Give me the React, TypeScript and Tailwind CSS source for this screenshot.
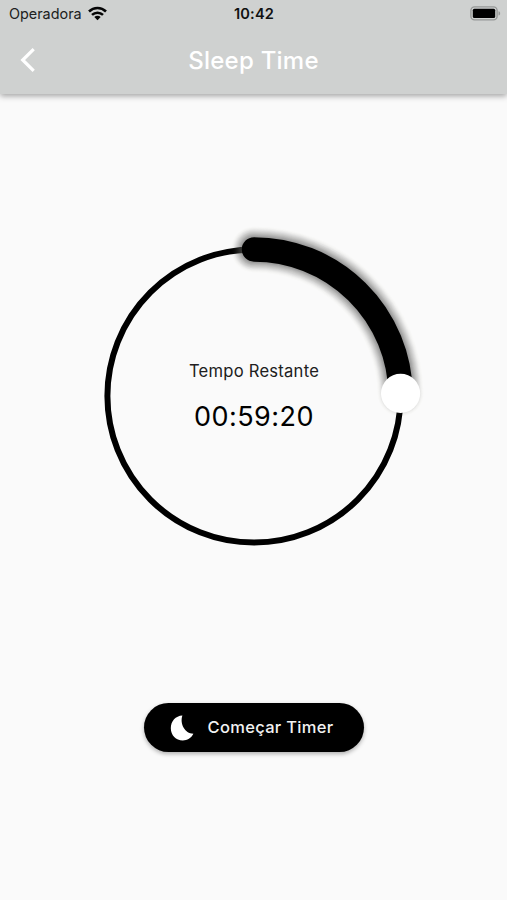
import React from 'react'

const CENTER = 180
const RADIUS = 146.6
const MAX_SHADOW = 46
const TRACK = 24.5

const timer = {
  label: 'Tempo Restante',
  value: '00:59:20',
  progress: 3560 / 14400
}

// widest, faintest strokes first
const shadowSteps = Array.from({ length: 11 }, (_, i) => ({
  width: MAX_SHADOW - i * ((MAX_SHADOW - TRACK) / 11),
  opacity: 0.016 + i * 0.0125
}))

function pointAt(progress: number) {
  const angle = progress * Math.PI * 2 - Math.PI / 2
  return {
    x: CENTER + RADIUS * Math.cos(angle),
    y: CENTER + RADIUS * Math.sin(angle)
  }
}

function WifiIcon() {
  return (
    <svg width="19" height="15" viewBox="0 0 19 15" fill="none" stroke="#050505" strokeWidth="2.6">
      <path d="M1 5.5C5.8 0.9 13.2 0.9 18 5.5" />
      <path d="M4 8.9C7.1 6 11.9 6 15 8.9" />
      <path d="M9.5 14.2L6.3 11.1C8.1 9.4 10.9 9.4 12.7 11.1Z" fill="#050505" stroke="none" />
    </svg>
  )
}

function BatteryIcon() {
  return (
    <svg width="31" height="15" viewBox="0 0 31 15">
      <rect x="0.9" y="0.9" width="26.2" height="13" rx="3.6" fill="none" stroke="#969897" strokeWidth="1.4" />
      <rect x="2.8" y="2.8" width="22.4" height="9.2" rx="1.5" fill="#000" />
      <path d="M28.5 5.2C30.7 5.7 30.7 9.1 28.5 9.6Z" fill="#969897" />
    </svg>
  )
}

function StatusBar() {
  return (
    <div className="grid h-[26px] grid-cols-3 items-center pl-[9px] pr-[6px]">
      <div className="flex items-center gap-[6px]">
        <span className="pt-[2px] text-[14.4px] leading-none text-[#202121]">Operadora</span>
        <WifiIcon />
      </div>
      <span className="pr-[2px] pt-[2px] text-center text-[14.6px] font-semibold leading-none tracking-[0.01em] text-[#101111]">10:42</span>
      <div className="flex justify-end">
        <BatteryIcon />
      </div>
    </div>
  )
}

function Header() {
  return (
    <header className="h-[94px] bg-[#cfd1d0] shadow-[0_2px_6px_rgba(0,0,0,0.36)]">
      <StatusBar />
      <div className="grid h-[67px] grid-cols-[60px_1fr_60px] items-center">
        <button className="pl-[20px]" aria-label="Voltar">
          <svg width="16" height="24" viewBox="0 0 16 24" fill="none" stroke="#fff" strokeWidth="3.2">
            <path d="M13.7 1.2L2.7 12L13.7 22.8" />
          </svg>
        </button>
        <h1 className="pt-[2px] text-center text-[24px] font-medium leading-none tracking-[0.01em] text-white">Sleep Time</h1>
      </div>
    </header>
  )
}

function CircularTimer() {
  const knob = pointAt(timer.progress)
  const arc = `M${CENTER} ${CENTER - RADIUS}A${RADIUS} ${RADIUS} 0 0 1 ${knob.x} ${knob.y}`

  return (
    <div className="grid h-[360px] w-[360px] place-items-center">
      <svg className="col-start-1 row-start-1" width="360" height="360" viewBox="0 0 360 360" fill="none" strokeLinecap="round">
        <circle cx={CENTER} cy={CENTER} r={RADIUS} stroke="#000" strokeWidth="6" />
        {shadowSteps.map((step) => (
          <path key={step.width} d={arc} stroke="#60605f" strokeWidth={step.width} strokeOpacity={step.opacity} />
        ))}
        <path d={arc} stroke="#000" strokeWidth={TRACK} />
        <circle cx={knob.x} cy={knob.y} r="19.6" fill="#fff" />
      </svg>
      <div className="col-start-1 row-start-1 flex flex-col items-center">
        <span className="pl-px text-[16.6px] leading-[24px] tracking-[0.014em] text-[#202020]">{timer.label}</span>
        <span className="mt-[18px] pl-px text-[27px] leading-[32px] tracking-[0.016em] text-black">{timer.value}</span>
      </div>
    </div>
  )
}

function StartButton() {
  return (
    <button className="flex h-[49px] w-[220px] items-center rounded-full bg-black pl-[26px] text-white shadow-[0_2px_4px_rgba(0,0,0,0.3)]">
      <svg width="25" height="26" viewBox="0 0 25 26" fill="#fff">
        <path d="M12.4 0.5C9.6 8.5 14.7 18.4 23.4 18.8C21.2 23.2 17.2 25.5 12.8 25.5C6 25.5 0.8 20 0.8 13.2C0.8 6.2 5.6 0.9 12.4 0.5Z" />
      </svg>
      <span className="ml-[13px] text-[16.5px] font-medium leading-none tracking-[0.019em] text-[#f2f2f2]">Começar Timer</span>
    </button>
  )
}

export default function App() {
  return (
    <div className="flex h-[900px] w-[507px] flex-col overflow-hidden bg-[#fafafa] font-['Inter','Liberation_Sans',sans-serif]">
      <Header />
      <main className="flex flex-col items-center pt-[122px]">
        <CircularTimer />
        <div className="mt-[127px]">
          <StartButton />
        </div>
      </main>
    </div>
  )
}
